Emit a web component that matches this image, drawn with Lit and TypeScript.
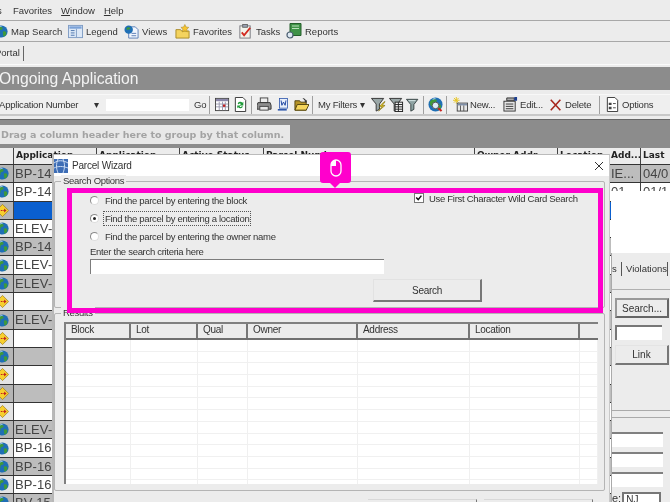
import { LitElement, html, css, svg } from 'lit';
import { customElement } from 'lit/decorators.js';

const icon = (w: number, body: unknown) =>
  html`<svg class="ico" width="${w}" height="${w}" viewBox="0 0 16 16">${body}</svg>`;

const globeBody = svg`
  <circle cx="8" cy="8" r="7.5" fill="#1f6fb5"/>
  <path d="M3 4c2-2 5-2 6-1s0 3-2 3-1 3-2 4-3-1-3-3 0-2 1-3zM10 8c2-1 4 0 4 2s-2 4-3 4-1-2-1-3-1-2 0-3z" fill="#3f9a3a"/>
  <path d="M5 2.5c1-.6 2-.8 3-.7" stroke="#bfe0f5" fill="none"/>`;
const globe = (w = 14) => icon(w, globeBody);

const flag = (w = 14) =>
  icon(w, svg`
    <path d="M8 .5 15.5 8 8 15.5.5 8z" fill="#f7cf2e" stroke="#a8861c"/>
    <path d="M3 8h8" stroke="#c2261d" stroke-width="1.4" stroke-dasharray="2 1"/>
    <path d="M10 5.5 13 8l-3 2.5z" fill="#c2261d"/>`);

const legendIcon = icon(15, svg`
  <rect x=".5" y="1.5" width="15" height="13" fill="#dce8f7" stroke="#7f9cc4"/>
  <rect x="1.5" y="2.5" width="13" height="2.5" fill="#7ba2d8"/>
  <path d="M9 5v9" stroke="#7f9cc4"/>
  <path d="M3 7h4M3 9.5h4M3 12h4" stroke="#4c74ad"/>`);
const viewsIcon = icon(15, svg`
  <path d="M5 3h7l3 3v9H5z" fill="#f0f5fd" stroke="#5a7db5"/>
  <circle cx="5" cy="6" r="4.5" fill="#1f6fb5"/>
  <path d="M2.5 5c1-2 3-2 4-1s-1 2-2 2-1 1-2-1z" fill="#3f9a3a"/>
  <path d="M8 10h5M8 12.5h5" stroke="#5a7db5"/>`);
const favIcon = icon(15, svg`
  <path d="M1 6h5l1 1.500h8V15H1z" fill="#f4d35e" stroke="#a98a25"/>
  <path d="M10.500 .5l1.300 2.700 2.900.4-2.100 2 .5 2.900-2.600-1.400-2.600 1.400.5-2.900-2.100-2 2.900-.4z" fill="#f7c531" stroke="#a98a25" stroke-width=".6"/>`);
const tasksIcon = icon(15, svg`
  <rect x="2" y="2" width="11" height="13" fill="#f3f3ea" stroke="#77787f"/>
  <rect x="5" y=".5" width="5" height="3" fill="#9aa3b4" stroke="#666"/>
  <path d="M4 9l2.500 3L13 4" stroke="#d22a20" stroke-width="2" fill="none"/>`);
const reportsIcon = icon(16, svg`
  <path d="M4 .5h11v12H4z" fill="#3f9247" stroke="#255f2b"/>
  <path d="M6 3h7M6 5.500h7" stroke="#b9e0b9"/>
  <circle cx="4" cy="12" r="3" fill="#dfe9f2" stroke="#4a5d70" stroke-width="1.200"/>`);
const calIcon = icon(15, svg`
  <rect x=".5" y="1.500" width="14" height="13" fill="#fff" stroke="#444"/>
  <rect x="1" y="2" width="13" height="2.500" fill="#8a86a8"/>
  <path d="M1 7.500h13M1 10.500h13M4.500 5v9M8 5v9M11 5v9" stroke="#9a9ab0"/>
  <rect x="8.500" y="8" width="2.500" height="2.500" fill="#c02020"/>`);
const docSyncIcon = icon(15, svg`
  <path d="M2.500.5h8l3 3v12h-11z" fill="#fff" stroke="#333"/>
  <path d="M5 7a3 3 0 0 1 5-1l1-1v4H7l1.500-1.500A1.500 1.500 0 0 0 6 8zM10.500 10a3 3 0 0 1-5 1l-1 1V9h3.500L7 10.300a1.500 1.500 0 0 0 2.500-.6z" fill="#1d9a38"/>`);
const printIcon = icon(15, svg`
  <rect x="3.500" y="1" width="8" height="5" fill="#eee" stroke="#444"/>
  <path d="M1 6h13l1 3v4H0V9z" fill="#8d8d8d" stroke="#333"/>
  <rect x="3" y="10" width="9" height="4" fill="#e8e8e8" stroke="#444"/>`);
const wordIcon = icon(13, svg`
  <rect x="3" y="0.500" width="10" height="12" fill="#e8effa" stroke="#2f58ac"/>
  <path d="M5 3l1 6 2-4 2 4 1-6" stroke="#1c44a0" fill="none" stroke-width="1.200"/>
  <path d="M1 14.500h11" stroke="#2f58ac" stroke-width="2"/>`);
const openIcon = icon(15, svg`
  <path d="M1 4h5l1 1.500h6V14H1z" fill="#b69427" stroke="#51430f"/>
  <path d="M3.500 8H16l-3 6H1z" fill="#f6d65c" stroke="#51430f"/>
  <path d="M9 1c2 0 3 1 4 3l1-1-.5 3-2.500-1 1-.5C11 3 10 2 9 1z" fill="#333"/>`);
const filterPath = 'M.5 1.500h13L9 7.500V13L5.500 15V7.500z';
const filterBoltIcon = icon(15, svg`
  <path d="${filterPath}" fill="#9aa7a7" stroke="#333"/>
  <path d="M14 5l-5 5h3l-4 5 7-6h-3l3-4z" fill="#f0d020" stroke="#6e5f08" stroke-width=".6"/>`);
const filterTableIcon = icon(15, svg`
  <path d="${filterPath}" fill="#9aa7a7" stroke="#333"/>
  <rect x="6.500" y="5.500" width="8" height="10" fill="#f2f2f2" stroke="#222"/>
  <path d="M6.500 8h8M6.500 10.500h8M6.500 13h8M10 5.500v10" stroke="#222"/>`);
const filterIcon = icon(14, svg`
  <path d="${filterPath}" fill="#8ea3a3" stroke="#2f3a3a"/>
  <path d="M3 3h8" stroke="#dfeeee"/>`);
const globeSearchIcon = icon(15, svg`
  ${globeBody}
  <circle cx="8" cy="9" r="3.500" fill="#dcecf8" stroke="#555"/>
  <path d="M11 12l3.500 3" stroke="#c8201c" stroke-width="2.200"/>`);
const newIcon = icon(15, svg`
  <path d="M3.500 0v7M0 3.500h7M1 1l5 5M6 1 1 6" stroke="#e8c420"/>
  <rect x="4.500" y="6.500" width="11" height="8.500" fill="#e8e8e8" stroke="#444"/>
  <rect x="5" y="7" width="10" height="2" fill="#7f8fa8"/>
  <path d="M8 9v6M11.500 9v6" stroke="#555"/>`);
const editIcon = icon(15, svg`
  <path d="M4 1h8v3H4z" fill="#aaa" stroke="#333"/>
  <rect x="1" y="4.500" width="12" height="10.500" fill="#e6e6e6" stroke="#333"/>
  <path d="M3 7.500h8M3 10h8M3 12.500h8" stroke="#333"/>
  <path d="M12 0h3v4h-3z" fill="#1d3f8f"/>`);
const deleteIcon = icon(14, svg`<path d="M2 2l11 12M13 2 2 14" stroke="#a8261c" stroke-width="1.800"/>`);
const optionsIcon = icon(15, svg`
  <path d="M2.500.5h8l3 3v12h-11z" fill="#fff" stroke="#333"/>
  <path d="M4 6h3v2.500H4zM4 10.500h3V13H4z" fill="#444"/>
  <path d="M8.500 7h3M8.500 11.500h3" stroke="#444"/>`);

const mainTools = [
  { w: 73, ic: globe(13), t: 'Map Search' },
  { w: 56, ic: legendIcon, t: 'Legend' },
  { w: 51, ic: viewsIcon, t: 'Views' },
  { w: 63, ic: favIcon, t: 'Favorites' },
  { w: 48, ic: tasksIcon, t: 'Tasks' },
  { w: 60, ic: reportsIcon, t: 'Reports' },
];

// w is the slot width, so the bar keeps the spacing of the original toolbar
const filterTools: { w: number; ic?: unknown; t?: string; sep?: boolean }[] = [
  { w: 8, sep: true },
  { w: 18, ic: calIcon },
  { w: 18, ic: docSyncIcon },
  { w: 4, sep: true },
  { w: 22, ic: printIcon },
  { w: 16, ic: wordIcon },
  { w: 20, ic: openIcon },
  { w: 2, sep: true },
  { w: 5 },
  { w: 51, t: 'My Filters ▾' },
  { w: 18, ic: filterBoltIcon },
  { w: 18, ic: filterTableIcon },
  { w: 16, ic: filterIcon },
  { w: 4, sep: true },
  { w: 20, ic: globeSearchIcon },
  { w: 2, sep: true },
  { w: 6 },
  { w: 50, ic: newIcon, t: 'New...' },
  { w: 46, ic: editIcon, t: 'Edit...' },
  { w: 48, ic: deleteIcon, t: 'Delete' },
  { w: 4, sep: true },
  { w: 4 },
  { w: 62, ic: optionsIcon, t: 'Options' },
];

const headers = [
  { w: 83, t: 'Application' },
  { w: 83, t: 'Application' },
  { w: 84, t: 'Active Status' },
  { w: 211, t: 'Parcel Number' },
  { w: 83, t: 'Owner Addr...' },
  { w: 54, t: 'Location' },
];

const rows: { ic: 'g' | 'f'; t: string; sel?: boolean }[] = [
  { ic: 'g', t: 'BP-14-' },
  { ic: 'g', t: 'BP-14-' },
  { ic: 'f', t: '', sel: true },
  { ic: 'g', t: 'ELEV-' },
  { ic: 'g', t: 'BP-14-' },
  { ic: 'g', t: 'ELEV-' },
  { ic: 'g', t: 'ELEV-' },
  { ic: 'f', t: '' },
  { ic: 'g', t: 'ELEV-' },
  { ic: 'f', t: '' },
  { ic: 'g', t: '' },
  { ic: 'f', t: '' },
  { ic: 'f', t: '' },
  { ic: 'f', t: '' },
  { ic: 'g', t: 'ELEV-' },
  { ic: 'g', t: 'BP-16-' },
  { ic: 'g', t: 'BP-16-' },
  { ic: 'g', t: 'BP-16-' },
  { ic: 'g', t: 'BV-15-' },
];

const resultCols = ['Block', 'Lot', 'Qual', 'Owner', 'Address', 'Location', ''];

@customElement('app-root')
class AppRoot extends LitElement {
  static styles = css`
    :host {
      display: block;
      width: 670px;
      height: 502px;
      overflow: hidden;
      position: relative;
      background: #ececec;
      font-family: 'Liberation Sans', Arial, sans-serif;
      font-size: 9.5px;
      color: #333;
    }
    .page {
      width: 670px;
      height: 502px;
      filter: blur(0.4px);
      display: flex;
      flex-direction: column;
      overflow: hidden;
    }
    .ico {
      display: block;
      flex: none;
    }
    .menu {
      height: 20px;
      flex: none;
      display: flex;
      align-items: center;
      border-bottom: 1px solid #a8a8a8;
      gap: 9px;
      padding-left: 13px;
      position: relative;
    }
    .menu .cut {
      position: absolute;
      left: -3px;
    }
    .tools {
      height: 20px;
      flex: none;
      display: flex;
      align-items: center;
      border-bottom: 1px solid #a8a8a8;
      margin-left: -5px;
    }
    .tool {
      display: flex;
      align-items: center;
      gap: 3px;
      flex: none;
      white-space: nowrap;
    }
    .tabs {
      height: 25px;
      flex: none;
      padding-top: 4px;
      box-sizing: border-box;
    }
    .tab {
      display: inline-block;
      height: 15px;
      line-height: 14px;
      width: 23px;
      text-indent: -5px;
      overflow: hidden;
      border-right: 1px solid #666;
      white-space: nowrap;
    }
    .tab-line {
      height: 1px;
      background: #fafafa;
      margin-top: 1px;
    }
    .title {
      height: 23px;
      flex: none;
      background: #8c8c8c;
      color: #f4f4f4;
      font-size: 15.7px;
      line-height: 23px;
      text-indent: -1px;
    }
    .filters {
      height: 20px;
      flex: none;
      margin-top: 4px;
      background: #efefef;
      border-top: 1px solid #f8f8f8;
      box-sizing: border-box;
      display: flex;
      align-items: center;
      letter-spacing: -0.2px;
    }
    .lookup {
      width: 106px;
      flex: none;
      display: flex;
      justify-content: space-between;
      padding-right: 7px;
      box-sizing: border-box;
      white-space: nowrap;
      text-indent: -1px;
    }
    .field {
      width: 83px;
      height: 12px;
      background: #fff;
      flex: none;
    }
    .go {
      width: 16px;
      flex: none;
      padding-left: 5px;
      box-sizing: border-box;
    }
    .slot {
      display: flex;
      align-items: center;
      gap: 2px;
      flex: none;
      white-space: nowrap;
      box-sizing: border-box;
    }
    .slot.center {
      justify-content: center;
    }
    .sep {
      width: 1px;
      height: 18px;
      background: #a0a0a0;
      margin: auto;
    }
    .filter-end {
      height: 6px;
      flex: none;
      border-top: 2px solid #c8c8c8;
      border-bottom: 1px solid #666;
      background: #ececec;
      box-sizing: border-box;
    }
    .groupby {
      height: 28px;
      flex: none;
      background: #8c8c8c;
      padding-top: 5px;
      box-sizing: border-box;
    }
    .groupbox {
      width: 290px;
      height: 19px;
      background: #e8e8e8;
      color: #a3a3a3;
      font-family: 'DejaVu Sans', sans-serif;
      font-weight: bold;
      font-size: 9.5px;
      line-height: 19px;
      white-space: nowrap;
      overflow: hidden;
      padding-left: 1px;
      box-sizing: border-box;
    }
    .body {
      flex: 1;
      display: flex;
      min-height: 0;
    }
    .grid {
      width: 611px;
      flex: none;
      overflow: hidden;
    }
    .head {
      height: 16px;
      display: flex;
      background: #ececec;
      border-bottom: 1px solid #333;
      font-family: 'DejaVu Sans', sans-serif;
      font-weight: bold;
      font-size: 9px;
      line-height: 15px;
      color: #222;
    }
    .head-gutter {
      width: 13px;
      flex: none;
      border-right: 1px solid #444;
    }
    .head-cell {
      flex: none;
      border-right: 1px solid #444;
      box-sizing: border-box;
      overflow: hidden;
      white-space: nowrap;
      padding-left: 2px;
    }
    .row {
      height: 17.3px;
      display: flex;
      border-bottom: 1px solid #333;
      background: #fff;
      font-size: 13px;
      letter-spacing: 0.1px;
      line-height: 17px;
      color: #444;
    }
    .row:nth-child(odd) {
      background: #bdbdbd;
    }
    .row.sel .txt {
      background: #0a5fcf;
    }
    .gutter {
      width: 14px;
      flex: none;
      background: #e4e4e4;
      border-right: 1px solid #444;
      display: flex;
      align-items: center;
      justify-content: flex-end;
      padding-right: 4px;
      box-sizing: border-box;
      overflow: hidden;
    }
    .row:nth-child(odd) .gutter {
      background: #b5b5b5;
    }
    .txt {
      flex: 1;
      padding-left: 1px;
      white-space: nowrap;
      overflow: hidden;
    }
    .side {
      width: 59px;
      flex: none;
      display: flex;
      flex-direction: column;
      overflow: hidden;
    }
    .side-cells {
      display: flex;
      height: 16px;
      background: #ececec;
      border-bottom: 1px solid #333;
      font-family: 'DejaVu Sans', sans-serif;
      font-weight: bold;
      font-size: 9px;
      line-height: 15px;
      color: #222;
      flex: none;
    }
    .side-a {
      width: 29px;
      flex: none;
      overflow: hidden;
      white-space: nowrap;
      border-right: 1px solid #444;
    }
    .side-b {
      padding-left: 2px;
      white-space: nowrap;
    }
    .side-row {
      display: flex;
      height: 17.3px;
      flex: none;
      background: #bdbdbd;
      border-bottom: 1px solid #333;
      font-size: 13px;
      line-height: 17px;
      color: #444;
      overflow: hidden;
      white-space: nowrap;
    }
    .side-row.clip {
      height: 8px;
      background: #fff;
      border-bottom: 0;
    }
    .side-white {
      height: 62px;
      flex: none;
      background: #fff;
    }
    .side-tabs {
      height: 37px;
      flex: none;
      border-bottom: 1px solid #b0b0b0;
      border-left: 1px solid #aaa;
      box-sizing: border-box;
      padding-top: 9px;
      display: flex;
      white-space: nowrap;
    }
    .side-tabs span {
      height: 14px;
      line-height: 13px;
      border-right: 1px solid #555;
      flex: none;
    }
    .side-tabs .t1 {
      width: 9px;
    }
    .side-tabs .t2 {
      width: 46px;
      padding-left: 4px;
      box-sizing: border-box;
    }
    .panel {
      flex: 1;
      display: flex;
      flex-direction: column;
      border-left: 1px solid #aaa;
      padding-left: 3px;
    }
    .panel-btn {
      width: 54px;
      height: 20px;
      margin-top: 5px;
      background: #ececec;
      border: 1px solid #e4e4e4;
      border-right: 2px solid #777;
      border-bottom: 2px solid #777;
      box-sizing: border-box;
      display: flex;
      align-items: center;
      justify-content: center;
      font-size: 10px;
      flex: none;
    }
    .panel-btn.dark {
      margin-top: 8px;
      border: 2px solid #666;
      border-top-color: #999;
      border-left-color: #999;
    }
    .panel-input {
      width: 47px;
      height: 15px;
      margin-top: 7px;
      background: #fff;
      border-top: 2px solid #777;
      border-left: 2px solid #777;
      box-sizing: border-box;
      flex: none;
    }
    .panel-rule {
      height: 6px;
      margin: 45px 0 14px -3px;
      border-top: 1px solid #aaa;
      border-bottom: 1px solid #aaa;
      flex: none;
    }
    .panel-field {
      width: 51px;
      height: 15px;
      margin: 0 0 5px -3px;
      background: #fff;
      border-top: 2px solid #808080;
      box-sizing: border-box;
      flex: none;
    }
    .panel-last {
      display: flex;
      margin-left: -3px;
      gap: 1px;
      font-size: 11px;
      flex: none;
    }
    .panel-select {
      width: 39px;
      height: 20px;
      background: #fff;
      border: 2px solid #777;
      box-sizing: border-box;
      font-size: 10px;
      padding-left: 2px;
    }

    /* the dialog floats over the application window */
    .dialog {
      position: absolute;
      left: 52px;
      top: 154px;
      width: 558px;
      height: 360px;
      background: #ececec;
      border-left: 2px solid #b8b8b8;
      border-top: 1px solid #bbb;
      border-right: 1px solid #c8c8c8;
      box-sizing: border-box;
      display: flex;
      flex-direction: column;
      filter: blur(0.4px);
      letter-spacing: -0.3px;
    }
    .dlg-title {
      height: 21px;
      flex: none;
      background: #fff;
      display: flex;
      align-items: center;
      gap: 4px;
      padding: 0 5px 0 0;
      font-size: 10px;
      letter-spacing: -0.2px;
    }
    .dlg-title span {
      flex: 1;
    }
    .group {
      position: relative;
      border: 1px solid #b4b4b4;
      border-radius: 2px;
      box-sizing: border-box;
      width: 551px;
      flex: none;
    }
    .legend {
      position: absolute;
      left: 6px;
      top: -7px;
      background: #ececec;
      padding: 0 2px;
      line-height: 12px;
    }
    .options {
      height: 127px;
      margin-top: 5px;
      padding: 9px 0 0 35px;
    }
    .opt-top {
      display: flex;
    }
    .radios {
      width: 324px;
      flex: none;
    }
    .radio-row {
      height: 18px;
      display: flex;
      align-items: center;
      gap: 6px;
    }
    .radio {
      width: 9px;
      height: 9px;
      border-radius: 50%;
      background: #fff;
      border: 1px solid #8a8a8a;
      border-bottom-color: #ddd;
      border-right-color: #ddd;
      box-sizing: border-box;
      flex: none;
      display: flex;
      align-items: center;
      justify-content: center;
    }
    .radio.on::after {
      content: '';
      width: 3px;
      height: 3px;
      border-radius: 50%;
      background: #222;
    }
    .focus {
      outline: 1px dotted #555;
      outline-offset: 1px;
    }
    .check-wrap {
      display: flex;
      gap: 5px;
      height: 12px;
      align-items: center;
      margin-top: 1px;
    }
    .check {
      width: 10px;
      height: 10px;
      background: #fff;
      border: 1px solid #777;
      box-sizing: border-box;
      flex: none;
    }
    .crit {
      height: 14px;
      line-height: 13px;
    }
    .crit-input {
      width: 294px;
      height: 15px;
      background: #fff;
      border-top: 1px solid #7c7c7c;
      border-left: 1px solid #7c7c7c;
      box-sizing: border-box;
    }
    .search-btn {
      width: 109px;
      height: 23px;
      margin: 5px 0 0 283px;
      background: #ececec;
      border: 1px solid #e2e2e2;
      border-right: 2px solid #777;
      border-bottom: 2px solid #777;
      box-sizing: border-box;
      display: flex;
      align-items: center;
      justify-content: center;
      font-size: 10px;
    }
    .results {
      height: 178px;
      margin-top: 5px;
      padding: 8px 6px 0 9px;
    }
    .table {
      background: #fff;
      border-top: 2px solid #808080;
      border-left: 2px solid #808080;
      height: 160px;
      overflow: hidden;
    }
    .tr {
      display: grid;
      grid-template-columns: 65px 67px 50px 110px 112px 110px 1fr;
      height: 11.7px;
      box-sizing: border-box;
      border-bottom: 1px solid #f0f0f0;
    }
    .tr.th {
      height: 14px;
      background: #ececec;
      border-bottom: 2px solid #707070;
      line-height: 12px;
      font-size: 10px;
      box-sizing: content-box;
    }
    .tr > div {
      border-right: 1px solid #f0f0f0;
      box-sizing: border-box;
    }
    .tr.th > div {
      border-right: 2px solid #777;
      padding-left: 5px;
    }
    .tr.th > div:last-child {
      border-right: 0;
    }
    .dlg-foot {
      display: flex;
      margin: 8px 0 0 314px;
      gap: 7px;
    }
    .dlg-foot div {
      width: 108px;
      height: 20px;
      border-top: 1px solid #d8d8d8;
      border-right: 1px solid #777;
    }

    /* tutorial highlight drawn over the dialog */
    .frame {
      position: absolute;
      left: 67px;
      top: 188px;
      width: 536px;
      height: 125px;
      border: 5px solid #ff00cc;
      box-sizing: border-box;
    }
    .pin {
      position: absolute;
      left: 320px;
      top: 152px;
      width: 31px;
      height: 31px;
      background: #ff00cc;
      border-radius: 3px;
      display: flex;
      align-items: center;
      justify-content: center;
    }
    .pin::after {
      content: '';
      position: absolute;
      left: 10px;
      top: 31px;
      border: 5px solid transparent;
      border-top-color: #ff00cc;
      border-bottom: 0;
    }
  `;

  render() {
    return html`
      <div class="page">
        <div class="menu">
          <span class="cut">s</span>
          <span>Favorites</span><span><u>W</u>indow</span><span><u>H</u>elp</span>
        </div>
        <div class="tools">
          ${mainTools.map(
            (b) => html`<div class="tool" style="width:${b.w}px">${b.ic}<span>${b.t}</span></div>`,
          )}
        </div>
        <div class="tabs"><span class="tab">Portal</span><div class="tab-line"></div></div>
        <div class="title">Ongoing Application</div>
        <div class="filters">
          <div class="lookup"><span>Application Number</span><span>▾</span></div>
          <div class="field"></div>
          <div class="go">Go</div>
          ${filterTools.map((b) =>
            b.sep
              ? html`<div class="slot" style="width:${b.w}px"><div class="sep"></div></div>`
              : html`<div class="slot ${b.t ? '' : 'center'}" style="width:${b.w}px">
                  ${b.ic ?? ''}${b.t ? html`<span>${b.t}</span>` : ''}
                </div>`,
          )}
        </div>
        <div class="filter-end"></div>
        <div class="groupby">
          <div class="groupbox">Drag a column header here to group by that column.</div>
        </div>
        <div class="body">
          <div class="grid">
            <div class="head">
              <div class="head-gutter"></div>
              ${headers.map(
                (h) => html`<div class="head-cell" style="width:${h.w}px">${h.t}</div>`,
              )}
            </div>
            <div>
              ${rows.map(
                (r) => html`<div class="row ${r.sel ? 'sel' : ''}">
                  <div class="gutter">${r.ic === 'g' ? globe(13) : flag(13)}</div>
                  <div class="txt">${r.t}</div>
                </div>`,
              )}
            </div>
          </div>
          <div class="side">
            <div class="side-cells">
              <div class="side-a">Add...</div>
              <div class="side-b">Last</div>
            </div>
            <div class="side-row"><div class="side-a">IE...</div><div class="side-b">04/0</div></div>
            <div class="side-row clip"><div class="side-a">01</div><div class="side-b">01/1</div></div>
            <div class="side-white"></div>
            <div class="side-tabs"><span class="t1">s</span><span class="t2">Violations</span></div>
            <div class="panel">
              <div class="panel-btn dark">Search...</div>
              <div class="panel-input"></div>
              <div class="panel-btn">Link</div>
              <div class="panel-rule"></div>
              <div class="panel-field"></div>
              <div class="panel-field"></div>
              <div class="panel-field"></div>
              <div class="panel-last"><span>e:</span><div class="panel-select">NJ</div></div>
            </div>
          </div>
        </div>
      </div>

      <div class="dialog">
        <div class="dlg-title">
          <svg class="ico" width="14" height="14" viewBox="0 0 14 14">
            <rect width="14" height="14" fill="#3d6db5" />
            <path d="M0 4c4-3 9-3 14 0M0 9c4-2 9-2 14 0M4 0c-2 5-2 9 0 14M9 0c2 5 2 9 0 14" stroke="#c9dbf3" fill="none" />
          </svg>
          <span>Parcel Wizard</span>
          <svg class="ico" width="10" height="10" viewBox="0 0 10 10">
            <path d="M1 1l8 8M9 1 1 9" stroke="#333" stroke-width="1" />
          </svg>
        </div>
        <div class="group options">
          <div class="legend">Search Options</div>
          <div class="opt-top">
            <div class="radios">
              <div class="radio-row"><i class="radio"></i><span>Find the parcel by entering the block</span></div>
              <div class="radio-row"><i class="radio on"></i><span class="focus">Find the parcel by entering a location</span></div>
              <div class="radio-row"><i class="radio"></i><span>Find the parcel by entering the owner name</span></div>
            </div>
            <div class="check-wrap">
              <svg class="check" viewBox="0 0 10 10"><path d="M1.500 4.500 4 7l4-5" stroke="#111" stroke-width="1.800" fill="none" /></svg>
              <span>Use First Character Wild Card Search</span>
            </div>
          </div>
          <div class="crit">Enter the search criteria here</div>
          <div class="crit-input"></div>
          <div class="search-btn">Search</div>
        </div>
        <div class="group results">
          <div class="legend">Results</div>
          <div class="table">
            <div class="tr th">${resultCols.map((c) => html`<div>${c}</div>`)}</div>
            ${Array.from({ length: 13 }).map(
              () => html`<div class="tr">${resultCols.map(() => html`<div></div>`)}</div>`,
            )}
          </div>
        </div>
        <div class="dlg-foot"><div></div><div></div></div>
      </div>

      <div class="frame"></div>
      <div class="pin">
        <svg width="12" height="18" viewBox="0 0 12 18">
          <rect x="1" y="1" width="10" height="16" rx="5" fill="none" stroke="#fff" stroke-width="1.300" />
          <path d="M1 7V6a5 5 0 0 1 5-5v6z" fill="#fff" />
        </svg>
      </div>
    `;
  }
}
